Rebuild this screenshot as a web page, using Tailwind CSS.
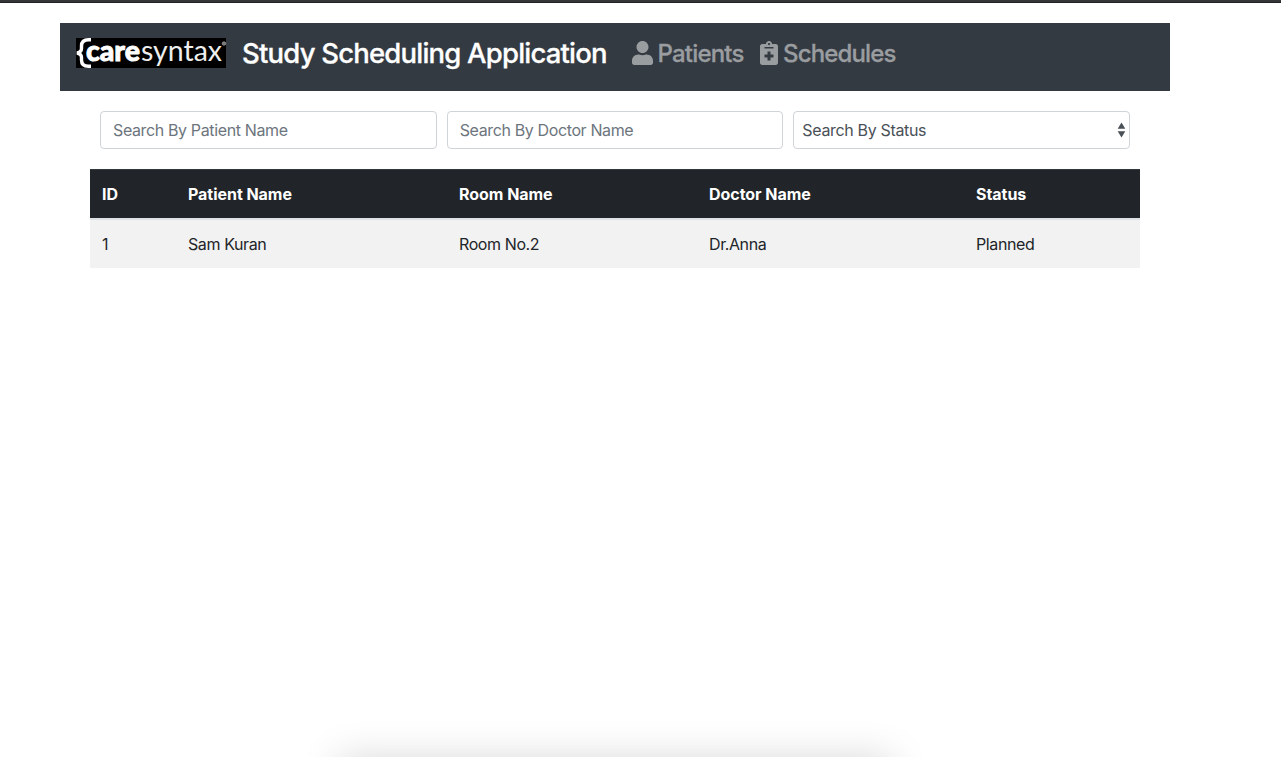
<!DOCTYPE html>
<html lang="en">
<head>
<meta charset="utf-8">
<title>Study Scheduling Application</title>
<script src="https://cdn.jsdelivr.net/npm/@tailwindcss/browser@4"></script>
</head>
<body class="relative h-screen overflow-hidden bg-white font-[Inter,sans-serif] text-base text-[#212529]">
<div class="h-[3px] border-b border-[#222] bg-[#343638]"></div>
<main class="ml-[60px] mt-5 w-[1110px]">
  <nav class="flex h-[68px] items-start bg-[#343a42] px-4">
    <svg class="mt-[15px] h-[30px] w-[150px] shrink-0 overflow-visible" viewBox="0 0 150 30" role="img" aria-label="caresyntax">
      <rect width="150" height="30" fill="#000"/>
      <path d="M15 1.700H12.500Q5.500 1.700 5.500 8V10.500Q5.500 14 1 15Q5.500 16 5.500 19.500V22Q5.500 28.300 12.500 28.300H15" fill="none" stroke="#fff" stroke-width="3.400"/>
      <text x="10" y="22.700" font-family="Lato, sans-serif" font-weight="900" font-size="29" fill="#fff" stroke="#fff" stroke-width=".9" textLength="54" lengthAdjust="spacingAndGlyphs">care</text>
      <text x="65" y="22.700" font-family="Lato, sans-serif" font-weight="400" font-size="29" fill="#eee" textLength="81" lengthAdjust="spacingAndGlyphs">syntax</text>
      <circle cx="148" cy="5.500" r="1.800" fill="#777" stroke="#aaa" stroke-width=".6"/>
    </svg>
    <span class="ml-4 mt-[9px] w-[365px] whitespace-nowrap text-[27.5px] font-medium leading-[42px] tracking-[-0.8px] text-white [-webkit-text-stroke:0.3px_#fff]">Study Scheduling Application</span>
    <a class="ml-6 mt-[13px] flex h-9 w-[113px] items-start gap-[5px] whitespace-nowrap text-2xl font-medium leading-9 tracking-[-0.8px] text-[#9a9da0] [-webkit-text-stroke:0.3px_#9a9da0]">
      <svg class="ml-[0.5px] mt-[5px] h-6 w-[21px] shrink-0" viewBox="0 0 448 512" fill="currentColor"><path d="M224 256c70.700 0 128-57.300 128-128S294.700 0 224 0 96 57.300 96 128s57.300 128 128 128zm89.600 32h-16.700c-22.200 10.200-46.900 16-72.900 16s-50.600-5.800-72.900-16h-16.700C60.200 288 0 348.200 0 422.400V464c0 26.500 21.500 48 48 48h352c26.500 0 48-21.500 48-48v-41.600c0-74.200-60.200-134.400-134.400-134.400z"/></svg>
      <span>Patients</span>
    </a>
    <a class="ml-4 mt-[13px] flex h-9 items-start gap-[5px] whitespace-nowrap text-2xl font-medium leading-9 tracking-[-0.85px] text-[#9a9da0] [-webkit-text-stroke:0.3px_#9a9da0]">
      <svg class="mt-[5px] h-6 w-[18px] shrink-0" viewBox="0 0 384 512" fill="currentColor"><path d="M336 64h-80c0-35.300-28.700-64-64-64s-64 28.700-64 64H48C21.500 64 0 85.500 0 112v352c0 26.500 21.500 48 48 48h288c26.500 0 48-21.500 48-48V112c0-26.500-21.500-48-48-48zM192 40c13.300 0 24 10.700 24 24s-10.700 24-24 24-24-10.700-24-24 10.700-24 24-24zm96 304c0 4.400-3.600 8-8 8h-56v56c0 4.400-3.600 8-8 8h-48c-4.400 0-8-3.600-8-8v-56h-56c-4.400 0-8-3.600-8-8v-48c0-4.400 3.600-8 8-8h56v-56c0-4.400 3.600-8 8-8h48c4.400 0 8 3.600 8 8v56h56c4.400 0 8 3.600 8 8v48zm0-192c0 4.400-3.600 8-8 8H104c-4.400 0-8-3.600-8-8v-16c0-4.400 3.600-8 8-8h176c4.400 0 8 3.600 8 8v16z"/></svg>
      <span>Schedules</span>
    </a>
  </nav>
  <form class="mx-10 mt-5 grid grid-cols-3 gap-[10px]">
    <input class="h-[38px] rounded border border-[#ced4da] bg-white px-3 tracking-[-0.37px] placeholder:text-[#6c757d]" placeholder="Search By Patient Name">
    <input class="h-[38px] rounded border border-[#ced4da] bg-white px-3 tracking-[-0.37px] placeholder:text-[#6c757d]" placeholder="Search By Doctor Name">
    <div class="flex h-[38px] items-center justify-between rounded border border-[#ced4da] bg-white pl-2 pr-[3px] tracking-[-0.34px] text-[#495057]" role="combobox">
      <span>Search By Status</span>
      <svg class="h-4 w-[9px]" viewBox="0 0 9 16" fill="#495057"><path d="M4.500 .5L8.300 6.800H.7zM.7 9.200H8.300L4.500 15.500z"/></svg>
    </div>
  </form>
  <table class="mx-[30px] mt-5 w-[1050px] table-fixed border-separate border-spacing-0 text-left">
    <colgroup><col class="w-[86px]"><col class="w-[271px]"><col class="w-[250px]"><col class="w-[267px]"><col class="w-[176px]"></colgroup>
    <thead class="bg-[#212529] tracking-[-0.04px] text-white">
      <tr class="h-[51px] *:border-b-2 *:border-t *:border-b-[#dee2e6] *:border-t-[#32383e] *:px-3 *:py-0 *:font-bold">
        <th>ID</th><th>Patient Name</th><th>Room Name</th><th>Doctor Name</th><th>Status</th>
      </tr>
    </thead>
    <tbody class="bg-[#f2f2f2] tracking-[-0.4px]">
      <tr class="h-12 *:px-3 *:py-0">
        <td>1</td><td>Sam Kuran</td><td>Room No.2</td><td>Dr.Anna</td><td>Planned</td>
      </tr>
    </tbody>
  </table>
</main>
<div class="absolute inset-x-0 bottom-0 h-[60px] overflow-hidden">
  <div class="ml-[338px] mt-[60px] h-20 w-[554px] shadow-[0_0_38px_rgba(0,0,0,0.15)]"></div>
</div>
</body>
</html>
